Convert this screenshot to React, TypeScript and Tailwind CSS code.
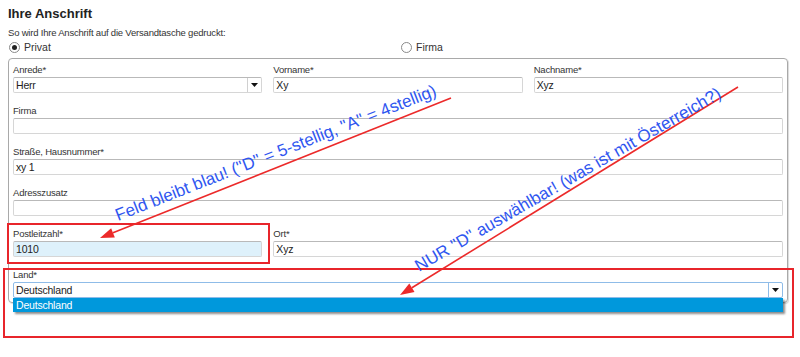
import React from "react";

function Label({ children }: { children: React.ReactNode }) {
  return (
    <div className="text-[9.5px] leading-[12px] tracking-[-0.2px] text-[#333] mb-[1px] whitespace-nowrap">
      {children}
    </div>
  );
}

function Field({
  value,
  bg = "bg-white",
}: {
  value?: string;
  bg?: string;
}) {
  return (
    <div
      className={`h-[16px] border border-[#d6d6d6] border-t-[#b9b9b9] rounded-[2px] ${bg} pl-[2px] text-[10.5px] leading-[14px] tracking-[-0.2px] text-[#222] whitespace-nowrap`}
    >
      {value}
    </div>
  );
}

function Triangle() {
  return (
    <svg width="7" height="4" viewBox="0 0 7 4">
      <path d="M0 0 L7 0 L3.5 4 Z" fill="#111" />
    </svg>
  );
}

function Radio({ checked, label }: { checked?: boolean; label: string }) {
  return (
    <div className="flex items-center gap-[4px]">
      <div className="w-[11px] h-[11px] rounded-full border border-[#8a8a8a] bg-white flex items-center justify-center">
        {checked && <div className="w-[5px] h-[5px] rounded-full bg-[#222]" />}
      </div>
      <span className="text-[10.5px] leading-[13px] text-[#333]">{label}</span>
    </div>
  );
}

export default function App() {
  return (
    <div className="relative w-[800px] h-[357px] bg-white overflow-hidden font-['Liberation_Sans',Arial,sans-serif]">
      <div className="pl-[8px] pt-[6px]">
        <h1 className="text-[13px] font-bold leading-[16px] text-[#222]">Ihre Anschrift</h1>
        <p className="mt-[5px] text-[9.5px] leading-[12px] tracking-[-0.2px] text-[#333]">
          So wird Ihre Anschrift auf die Versandtasche gedruckt:
        </p>
        <div className="mt-[1px] h-[14px] flex items-center pl-[1px]">
          <div className="w-[392px]">
            <Radio checked label="Privat" />
          </div>
          <Radio label="Firma" />
        </div>
        <div className="mt-[4px] w-[780px] border border-[#a9a9a9] rounded-[4px] shadow-[1px_1px_1px_rgba(0,0,0,0.15)] px-[4px] pt-[5px] pb-[4px]">
          <div className="grid grid-cols-3 gap-x-[11px] gap-y-[12px]">
            <div>
              <Label>Anrede*</Label>
              <div className="h-[16px] border border-[#d6d6d6] border-t-[#b9b9b9] rounded-[2px] bg-white flex">
                <div className="flex-1 pl-[2px] text-[10.5px] leading-[14px] tracking-[-0.2px] text-[#222]">Herr</div>
                <div className="w-[14px] border-l border-[#d0d0d0] flex items-center justify-center">
                  <Triangle />
                </div>
              </div>
            </div>
            <div>
              <Label>Vorname*</Label>
              <Field value="Xy" />
            </div>
            <div>
              <Label>Nachname*</Label>
              <Field value="Xyz" />
            </div>
            <div className="col-span-3">
              <Label>Firma</Label>
              <Field />
            </div>
            <div className="col-span-3">
              <Label>Straße, Hausnummer*</Label>
              <Field value="xy 1" />
            </div>
            <div className="col-span-3">
              <Label>Adresszusatz</Label>
              <Field />
            </div>
            <div>
              <Label>Postleitzahl*</Label>
              <Field value="1010" bg="bg-[#def1fb]" />
            </div>
            <div className="col-span-2">
              <Label>Ort*</Label>
              <Field value="Xyz" />
            </div>
            <div className="col-span-3">
              <Label>Land*</Label>
              <div className="relative h-[16px] border border-[#8fbce8] rounded-[2px] bg-white flex">
                <div className="flex-1 pl-[2px] text-[10.5px] leading-[14px] tracking-[-0.2px] text-[#222]">Deutschland</div>
                <div className="w-[14px] border-l border-[#8fbce8] flex items-center justify-center">
                  <Triangle />
                </div>
                <div className="absolute left-[-1px] right-[-1px] top-[15px] h-[14px] bg-[#0098dc] shadow-[2px_2px_2px_rgba(0,0,0,0.45)] pl-[3px] text-[10.5px] leading-[14px] tracking-[-0.2px] text-white">
                  Deutschland
                </div>
              </div>
            </div>
          </div>
        </div>
      </div>

      <svg
        className="absolute left-0 top-0 pointer-events-none"
        width="800"
        height="357"
        viewBox="0 0 800 357"
      >
        <rect x="8" y="224" width="261" height="39" fill="none" stroke="#e8252b" strokeWidth="2" />
        <rect x="4" y="269" width="789" height="68" fill="none" stroke="#e8252b" strokeWidth="2" />

        <line x1="451" y1="98" x2="113" y2="232.8" stroke="#ec2a2a" strokeWidth="1.6" />
        <polygon points="100,238 114.85,237.45 111.15,228.15" fill="#ec2a2a" />

        <line x1="738" y1="87" x2="411.9" y2="287.7" stroke="#ec2a2a" strokeWidth="1.6" />
        <polygon points="400,295 414.54,291.92 409.3,283.4" fill="#ec2a2a" />

        <text
          x="118"
          y="221"
          transform="rotate(-21.5 118 221)"
          fill="#2f56f0"
          fontFamily="'Liberation Sans', Arial, sans-serif"
          fontSize="17"
        >
          Feld bleibt blau! ("D" = 5-stellig, "A" = 4stellig)
        </text>
        <text
          x="419"
          y="272"
          transform="rotate(-30 419 272)"
          fill="#2f56f0"
          fontFamily="'Liberation Sans', Arial, sans-serif"
          fontSize="17"
        >
          NUR "D" auswählbar! (was ist mit Österreich?)
        </text>
      </svg>
    </div>
  );
}
